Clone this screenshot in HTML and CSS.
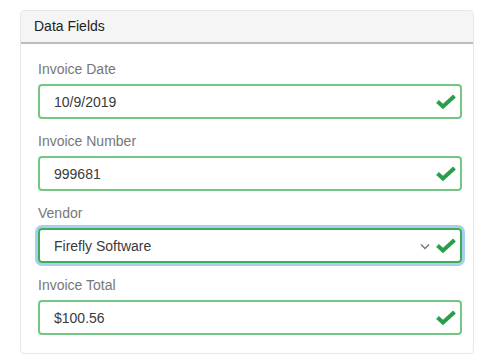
FILE: index.html
```html
<!DOCTYPE html>
<html lang="en">
<head>
    <meta charset="UTF-8">
    <meta name="viewport" content="width=device-width, initial-scale=1.0">
    <title>Data Fields</title>
    <link rel="stylesheet" href="styles.css">
</head>
<body>
    <div class="panel">
        <div class="panel-heading">Data Fields</div>
        <div class="panel-body">
            <div class="form-group">
                <label>Invoice Date</label>
                <div class="field valid">
                    <span class="value">10/9/2019</span>
                    <svg class="check" width="20" height="15" viewBox="0 0 20 15"><path d="M1.5 7.5 L7 12.5 L18.5 2" fill="none" stroke="#2a9e48" stroke-width="4"/></svg>
                </div>
            </div>
            <div class="form-group">
                <label>Invoice Number</label>
                <div class="field valid">
                    <span class="value">999681</span>
                    <svg class="check" width="20" height="15" viewBox="0 0 20 15"><path d="M1.5 7.5 L7 12.5 L18.5 2" fill="none" stroke="#2a9e48" stroke-width="4"/></svg>
                </div>
            </div>
            <div class="form-group">
                <label>Vendor</label>
                <div class="field valid focused">
                    <span class="value">Firefly Software</span>
                    <svg class="caret" width="10" height="7" viewBox="0 0 10 7"><path d="M1 1.5 L5 5.5 L9 1.5" fill="none" stroke="#777" stroke-width="1.4"/></svg>
                    <svg class="check" width="20" height="15" viewBox="0 0 20 15"><path d="M1.5 7.5 L7 12.5 L18.5 2" fill="none" stroke="#2a9e48" stroke-width="4"/></svg>
                </div>
            </div>
            <div class="form-group">
                <label>Invoice Total</label>
                <div class="field valid">
                    <span class="value">$100.56</span>
                    <svg class="check" width="20" height="15" viewBox="0 0 20 15"><path d="M1.5 7.5 L7 12.5 L18.5 2" fill="none" stroke="#2a9e48" stroke-width="4"/></svg>
                </div>
            </div>
        </div>
    </div>
</body>
</html>
```

FILE: styles.css
```css
body {
    margin: 0;
    padding: 10px 20px;
    font-family: "Liberation Sans", Arial, sans-serif;
    font-size: 14px;
    color: #333;
    background: #fff;
}

.panel {
    width: 454px;
    box-sizing: border-box;
    border: 1px solid #e6e6e6;
    border-radius: 4px;
    background: #fff;
}

.panel-heading {
    height: 31px;
    line-height: 31px;
    padding: 0 13px;
    background: #f5f5f5;
    border-bottom: 2px solid #bdbdbd;
    border-radius: 4px 4px 0 0;
    color: #222;
}

.panel-body {
    padding: 15px 11px 18px 17px;
}

.form-group {
    margin-bottom: 12px;
}

.form-group:last-child {
    margin-bottom: 0;
}

.form-group label {
    display: block;
    line-height: 20px;
    margin-bottom: 5px;
    color: #777;
}

.field {
    display: flex;
    align-items: center;
    height: 35px;
    box-sizing: border-box;
    padding: 0 4px 0 14px;
    border: 2px solid #74c685;
    border-radius: 4px;
    color: #3a3a3a;
}

.field.focused {
    border-color: #3dae55;
    box-shadow: 0 0 0 3px #a9cdef;
}

.value {
    flex: 1;
}

.caret {
    margin-right: 6px;
    margin-top: 2px;
}

.check {
    display: block;
}
```
